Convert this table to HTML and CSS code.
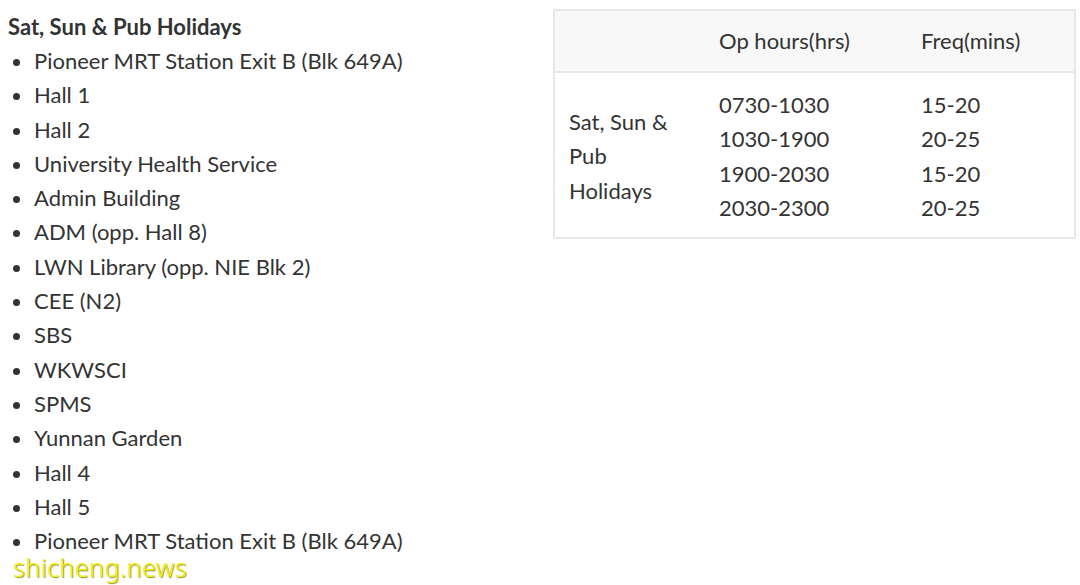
FILE: index.html
```html
<!DOCTYPE html>
<html>
<head>
<meta charset="utf-8">
<link rel="stylesheet" href="styles.css">
</head>
<body>
<div class="page">
  <div class="stops">
    <div class="heading">Sat, Sun &amp; Pub Holidays</div>
    <ul class="list">
      <li>Pioneer MRT Station Exit B (Blk 649A)</li>
      <li>Hall 1</li>
      <li>Hall 2</li>
      <li>University Health Service</li>
      <li>Admin Building</li>
      <li>ADM (opp. Hall 8)</li>
      <li>LWN Library (opp. NIE Blk 2)</li>
      <li>CEE (N2)</li>
      <li>SBS</li>
      <li>WKWSCI</li>
      <li>SPMS</li>
      <li>Yunnan Garden</li>
      <li>Hall 4</li>
      <li>Hall 5</li>
      <li>Pioneer MRT Station Exit B (Blk 649A)</li>
    </ul>
  </div>
  <table class="sched">
    <thead>
      <tr><th class="c1"></th><th class="c2">Op hours(hrs)</th><th class="c3">Freq(mins)</th></tr>
    </thead>
    <tbody>
      <tr>
        <td class="c1">Sat, Sun &amp;<br>Pub<br>Holidays</td>
        <td class="c2">0730-1030<br>1030-1900<br>1900-2030<br>2030-2300</td>
        <td class="c3">15-20<br>20-25<br>15-20<br>20-25</td>
      </tr>
    </tbody>
  </table>
</div>
<div class="watermark">shicheng.news</div>
</body>
</html>
```

FILE: styles.css
```css
html, body {
  margin: 0;
  padding: 0;
  background: #ffffff;
}
body {
  font-family: Lato, "Noto Sans", sans-serif;
  color: #333333;
  font-size: 22px;
  position: relative;
  height: 585px;
  overflow: hidden;
}
.page {
  display: flex;
  align-items: flex-start;
  padding: 9px 4px 0 8px;
}
.stops {
  width: 545px;
  padding-top: 1px;
}
.heading {
  font-weight: 700;
  line-height: 34px;
  margin-top: 0;
}
.list {
  margin: 0;
  padding: 0 0 0 26px;
  line-height: 34.3px;
}
.sched {
  width: 523px;
  border-collapse: collapse;
  border: 2px solid #e8e8e8;
  line-height: 34.3px;
}
.sched th {
  font-weight: 400;
  text-align: left;
  background: #f8f8f8;
  height: 60px;
  padding: 0 14px;
  border-bottom: 2px solid #e8e8e8;
}
.sched td {
  padding: 15px 14px 12px;
  vertical-align: middle;
}
.c1 { width: 122px; }
.c2 { width: 174px; }
.watermark {
  position: absolute;
  left: 13px;
  top: 550px;
  font-family: "Noto Sans", sans-serif;
  font-weight: 300;
  font-size: 25px;
  color: #f5f200;
  letter-spacing: 0.5px;
  text-shadow: 1px 1px 1px #8a8a20;
}
```
